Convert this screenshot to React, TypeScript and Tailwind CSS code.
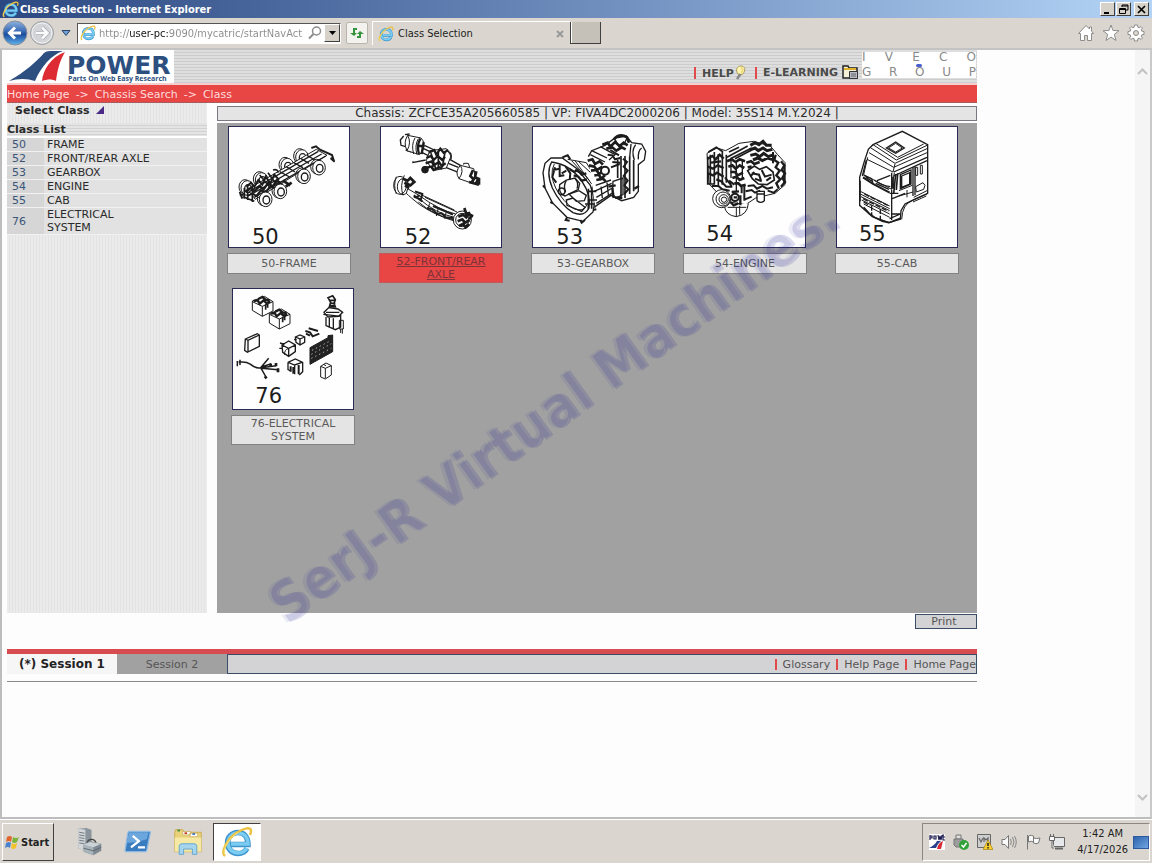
import type { ReactNode } from 'react'

const uiFont = "font-['DejaVu_Sans_Condensed','DejaVu_Sans',sans-serif]"
const pageFont = "font-['DejaVu_Sans',sans-serif]"
const raised =
  'border border-t-white border-l-white border-r-[#404040] border-b-[#404040]'

const sidebarClasses = [
  { code: '50', name: 'FRAME' },
  { code: '52', name: 'FRONT/REAR AXLE' },
  { code: '53', name: 'GEARBOX' },
  { code: '54', name: 'ENGINE' },
  { code: '55', name: 'CAB' },
  { code: '76', name: 'ELECTRICAL SYSTEM' },
]

const cards = [
  { label: '50-FRAME', drawing: <FrameDrawing /> },
  { label: '52-FRONT/REAR AXLE', drawing: <AxleDrawing />, active: true },
  { label: '53-GEARBOX', drawing: <GearboxDrawing /> },
  { label: '54-ENGINE', drawing: <EngineDrawing /> },
  { label: '55-CAB', drawing: <CabDrawing /> },
  { label: '76-ELECTRICAL SYSTEM', drawing: <ElectricalDrawing /> },
]

export default function App() {
  return (
    <div className={`flex min-h-screen flex-col bg-[#dad6cf] ${uiFont} text-[11px] leading-[13px]`}>
      <TitleBar />
      <Toolbar />
      <div className="flex grow border-2 border-t-[#c3c3c3] border-l-[#bdbdbd] border-r-[#c9c9c9] border-b-[#bdbdbd] bg-[#fdfdfd]">
        <main className={`min-w-0 grow pl-[5px] ${pageFont}`}>
          <div className="w-full max-w-[970px]">
            <PageHeader />
            <Breadcrumb />
            <div className="flex">
              <Sidebar />
              <ClassPanel />
            </div>
            <div className="flex justify-end pt-px">
              <button className="h-[15px] w-[62px] border border-[#3a4c66] bg-[#d3d3d5] pr-1 text-[#555]">
                Print
              </button>
            </div>
            <SessionBar />
          </div>
        </main>
        <ScrollBar />
      </div>
      <TaskBar />
    </div>
  )
}

function TitleBar() {
  return (
    <header className="flex h-[18px] items-center gap-px bg-linear-to-r from-[#2c4882] via-[#6d8bbb] to-[#b4d4f6] pr-[3px] pl-[2px]">
      <ExplorerIcon className="size-[17px]" />
      <h1 className="grow text-[11px] font-bold text-white">
        Class Selection - Internet Explorer
      </h1>
      <WindowButton label="Minimize">
        <path d="M3 9h5v2H3z" fill="#000" />
      </WindowButton>
      <WindowButton label="Restore">
        <path d="M5 2h6v5H9M5 2v2M5 3h6M2.5 5.5h6v5h-6zM2 6.500h7" fill="none" stroke="#000" />
      </WindowButton>
      <div className="w-px" />
      <WindowButton label="Close">
        <path d="M3 3l7 7M10 3l-7 7" fill="none" stroke="#000" strokeWidth="1.700" />
      </WindowButton>
    </header>
  )
}

function WindowButton({ label, children }: { label: string; children: ReactNode }) {
  return (
    <button aria-label={label} className={`h-[14px] w-[15px] bg-[#d6d2ca] ${raised}`}>
      <svg viewBox="0 0 13 12" className="h-3 w-[13px]">
        {children}
      </svg>
    </button>
  )
}

function Toolbar() {
  return (
    <div className="flex h-[30px] items-center bg-[#dad6cf] pr-[7px] pl-[2px]">
      <button aria-label="Back" className="z-10">
        <svg viewBox="0 0 26 26" className="size-[26px]">
          <defs>
            <linearGradient id="back" x1="0" y1="0" x2="0" y2="1">
              <stop offset="0" stopColor="#8fb3e0" />
              <stop offset="0.45" stopColor="#3568b4" />
              <stop offset="0.55" stopColor="#1c4c9c" />
              <stop offset="1" stopColor="#5fb4ee" />
            </linearGradient>
          </defs>
          <circle cx="13" cy="13" r="12" fill="url(#back)" stroke="#8b9098" />
          <path d="M19 13H8M13 7.500L7.500 13l5.500 5.500" fill="none" stroke="#fff" strokeWidth="3" />
        </svg>
      </button>
      <button aria-label="Forward" className="ml-px">
        <svg viewBox="0 0 26 26" className="size-[26px]">
          <circle cx="13" cy="13" r="11.500" fill="#d2d4d8" stroke="#9b9da1" />
          <circle cx="13" cy="13" r="10" fill="none" stroke="#f0f1f3" />
          <path d="M7 13h11M13 7.500l5.500 5.500-5.500 5.500" fill="none" stroke="#a9abb0" strokeWidth="4" />
          <path d="M7 13h11M13 7.500l5.500 5.500-5.500 5.500" fill="none" stroke="#fafafa" strokeWidth="2.500" />
        </svg>
      </button>
      <button aria-label="Recent pages" className="mx-[6px]">
        <svg viewBox="0 0 10 8" className="h-2 w-[10px]">
          <path d="M1 1.500h8L5 6.500z" fill="#6fa0d6" stroke="#2d4568" />
        </svg>
      </button>
      <form className="flex h-[21px] w-[264px] items-center border border-t-[#555] border-l-[#555] border-r-white border-b-white bg-white pl-[2px]">
        <ExplorerIcon className="size-4" />
        <input
          aria-label="Address"
          readOnly
          value="http://user-pc:9090/mycatric/startNavAct"
          className="ml-[3px] min-w-0 grow bg-[linear-gradient(90deg,#8a8a8a_31px,#111_31px,#111_69px,#8a8a8a_69px)] bg-clip-text text-transparent outline-none"
        />
        <button type="button" aria-label="Search" className="mr-[2px]">
          <svg viewBox="0 0 14 14" className="size-[14px]" fill="none" stroke="#8c8c8c">
            <circle cx="8.500" cy="5" r="4" strokeWidth="1.500" />
            <path d="M5.500 8L1 12.500" strokeWidth="2" />
          </svg>
        </button>
        <button type="button" aria-label="Show addresses" className={`flex h-[18px] w-4 items-center justify-center bg-[#d6d2ca] ${raised}`}>
          <svg viewBox="0 0 7 4" className="h-1 w-[7px]">
            <path d="M0 0h7L3.500 4z" />
          </svg>
        </button>
      </form>
      <button aria-label="Refresh" className="ml-[5px] flex size-[22px] items-center justify-center rounded-xs border border-[#b9b5ad] bg-[#f3f2ef]">
        <svg viewBox="0 0 16 16" className="size-4" fill="#35953c">
          <path d="M4 3h4v2H6v3h2L5 11 1 8h3z" />
          <path d="M11 6l4 3h-3v4H8v-2h2V9H8z" />
        </svg>
      </button>
      <div className="ml-1 flex h-6 w-[198px] items-center gap-1 border-t border-l border-white pr-[6px] pl-[5px]">
        <ExplorerIcon className="size-4" />
        <span className="grow text-[#222]">Class Selection</span>
        <button aria-label="Close tab">
          <svg viewBox="0 0 8 8" className="size-2" stroke="#999" strokeWidth="2">
            <path d="M1 1l6 6M7 1L1 7" />
          </svg>
        </button>
      </div>
      <div className="h-[22px] border-r border-b border-l border-[#404040]">
        <button aria-label="New tab" className="block h-[21px] w-[29px] border-l border-white bg-[#c5c1b9]" />
      </div>
      <div className="flex grow items-center justify-end gap-[7px]">
        <a href="#" aria-label="Home">
          <svg viewBox="0 0 18 18" className="size-[18px]" fill="#fff" stroke="#8d8d8d">
            <path d="M9 1.500L1.500 9.500h2v7h4v-5h3v5h4v-7h2L14.500 7V3h-2v2z" />
          </svg>
        </a>
        <button aria-label="Favorites">
          <svg viewBox="0 0 18 18" className="size-[18px]" fill="#fff" stroke="#8d8d8d">
            <path d="M9 1l2 5.500 6 .2-4.700 3.700L14 16.500 9 13l-5 3.500 1.700-6.100L1 6.700l6-.2z" />
          </svg>
        </button>
        <button aria-label="Tools">
          <svg viewBox="0 0 18 18" className="size-[18px]">
            <path
              d="M7.500 1h3l.3 2.200 1.400.6L14 2.500 15.500 4l-1.300 1.800.6 1.400 2.200.3v3l-2.200.3-.6 1.400 1.300 1.800-1.500 1.500-1.800-1.300-1.400.6-.3 2.200h-3l-.3-2.200-1.400-.6L4 15.500 2.500 14l1.300-1.800-.6-1.400L1 10.500v-3l2.200-.3.6-1.400L2.500 4 4 2.500l1.800 1.300 1.400-.6z"
              fill="#fff"
              stroke="#8d8d8d"
            />
            <circle cx="9" cy="9" r="2.500" fill="#dad6cf" stroke="#8d8d8d" />
          </svg>
        </button>
      </div>
    </div>
  )
}

function ExplorerIcon({ className }: { className: string }) {
  return (
    <svg viewBox="0 0 32 32" className={className} fill="none">
      <path d="M26 22.500c-2 3.500-5.200 5-9 5-6 0-10.500-4.500-10.500-10.500S11 6.500 17 6.500 27 11 27 18.500H9" stroke="#3c94cf" strokeWidth="5.500" />
      <path d="M26 22c-2 3.500-5.200 5-9 5-6 0-10-4.500-10-10S11 7 17 7s10 4 10 11H10" stroke="#7accf0" strokeWidth="3.500" />
      <path d="M4 30C-1 26 7 12 16 6.500 23 2 30 .500 30 5c0 2-.5 3-1 4" stroke="#ecc040" strokeWidth="2.500" />
      <path d="M4.500 29C0 25 8 12 17 6.500" stroke="#fbe574" />
    </svg>
  )
}

function PageHeader() {
  return (
    <div className="flex h-[35px] items-start justify-between border-b-2 border-[#f3cfcf] bg-[repeating-linear-gradient(180deg,#dedede_0px,#dedede_2px,#cccccc_2px,#cccccc_3px)]">
      <svg viewBox="0 0 167 33" className="h-[33px] w-[167px] bg-white">
        <path d="M2 31C18 22 30 11 37 3q2-2 6-2h13C44 5 34 17 28 31q-12-4-26 0z" fill="#2d4f80" />
        <path d="M35 31C36 20 44 7 58 2c-5 8-8 19-9 29-4-2-8-2-14 0z" fill="#dd2a33" />
        <text x="60" y="24" fontSize="25" fontWeight="bold" fill="#2d4f80">
          POWER
        </text>
        <text x="61" y="31" fontSize="7" fontWeight="bold" fill="#2d4f80" fontFamily="Open Sans">
          Parts On Web Easy Research
        </text>
      </svg>
      <nav className="flex items-start pt-[2px] pr-px font-bold text-[#4a4a4a]">
        <a href="#" className="flex items-center pt-[13px]">
          <span className="mr-[6px] h-3 w-[2px] bg-[#e04a4a]" />HELP
          <svg viewBox="0 0 12 16" className="h-4 w-3">
            <path d="M4 9C1 5 3 1 7 1s5 4 2 8l-3 1z" fill="#fff3b0" stroke="#a8985a" />
            <path d="M7 3c2 0 2 3 0 5" stroke="#f0dc80" strokeWidth="2" fill="none" />
            <path d="M6.500 9L3 14" stroke="#888" strokeWidth="2.500" />
          </svg>
        </a>
        <a href="#" className="flex items-center pt-[13px] pl-[9px]">
          <span className="mr-[6px] h-3 w-[2px] bg-[#e04a4a]" />E-LEARNING
          <svg viewBox="0 0 17 15" className="ml-1 h-[15px] w-[17px]">
            <path d="M1 13V1h5l1 2h8v10z" fill="#f4efd6" stroke="#222" strokeWidth="1.500" />
            <path d="M2 3h12v2H2z" fill="#e0b32a" />
            <path d="M7.500 6.500h8v7h-8z" fill="#b9bcc6" stroke="#333" />
            <path d="M9 9h5M9 11h5" stroke="#666" />
          </svg>
        </a>
        <div className="ml-[3px] flex h-[26px] w-[114px] flex-col justify-between bg-white text-[12px] leading-[11px] font-normal text-[#8a8a8a]">
          <Spaced word="IVECO" />
          <span className="mx-auto h-[3px] w-[6px] rounded-full bg-[#4a5fd0]" />
          <Spaced word="GROUP" />
        </div>
      </nav>
    </div>
  )
}

function Spaced({ word }: { word: string }) {
  return (
    <div className="flex justify-between">
      {word.split('').map((letter) => (
        <span key={letter}>{letter}</span>
      ))}
    </div>
  )
}

function Breadcrumb() {
  return (
    <nav className="flex h-[18px] items-center gap-[6px] border-b border-[#a85b5b] bg-[#e84545] pt-[2px] text-[#ffdcdc]">
      <a href="#">Home Page</a>
      <span>-&gt;</span>
      <a href="#">Chassis Search</a>
      <span>-&gt;</span>
      <a href="#">Class</a>
    </nav>
  )
}

function Sidebar() {
  return (
    <aside className="w-[200px] shrink-0 bg-[repeating-linear-gradient(90deg,#ebebeb_0px,#ebebeb_2px,#e3e3e3_2px,#e3e3e3_3px)] text-[#2a2a2a]">
      <div className="flex h-5 items-start gap-[6px] pt-px pl-2 font-bold">
        Select Class
        <svg viewBox="0 0 8 8" className="mt-[2px] size-2">
          <path d="M8 0v8H0z" fill="#4b2a86" />
        </svg>
      </div>
      <h2 className="h-[15px] border-b-2 border-white bg-[repeating-linear-gradient(180deg,#e4e4e4_0px,#e4e4e4_2px,#d2d2d2_2px,#d2d2d2_3px)] font-bold">
        Class List
      </h2>
      <table className="w-full border-collapse">
        <tbody>
          {sidebarClasses.map(({ code, name }) => (
            <tr key={code} className="border-b border-[#f1f1f1]">
              <td className="w-[37px] bg-[#d6d6d6] pl-[5px]">
                <a href="#" className="text-[#3a5578]">
                  {code}
                </a>
              </td>
              <td className="bg-[#e2e2e2] pr-12 pl-[3px]">{name}</td>
            </tr>
          ))}
        </tbody>
      </table>
    </aside>
  )
}

function ClassPanel() {
  return (
    <section className="ml-[10px] flex min-w-0 grow flex-col pt-[3px]">
      <p className="h-[15px] border border-[#7b7680] bg-[#e4e4e4] text-center text-[12px] text-[#2c2c2c]">
        Chassis: ZCFCE35A205660585 | VP: FIVA4DC2000206 | Model: 35S14 M.Y.2024 |
      </p>
      <div className="relative mt-[2px] min-h-[490px] bg-[#a1a1a1]">
        <ul className="flex flex-wrap">
          {cards.map(({ label, drawing, active }) => (
            <ClassCard key={label} label={label} active={active}>
              {drawing}
            </ClassCard>
          ))}
        </ul>
        <Watermark />
      </div>
    </section>
  )
}

function ClassCard({
  label,
  active = false,
  children,
}: {
  label: string
  active?: boolean
  children: ReactNode
}) {
  return (
    <li className="flex w-[152px] flex-col items-center gap-[5px] pt-[3px] pr-2 pb-[2px] last:pr-0">
      <a href="#" aria-label={label} className="border border-[#2b2a55] bg-[#fefefe]">
        {children}
      </a>
      <a
        href="#"
        className={`flex min-h-[21px] w-[124px] items-center justify-center border px-3 py-px text-center ${
          active
            ? 'border-[#c05a5a] bg-[#e84545] text-[#7d3338] underline'
            : 'border-[#828282] bg-[#e4e4e4] text-[#5a5a5a]'
        }`}
      >
        {label}
      </a>
    </li>
  )
}

function Watermark() {
  return (
    <svg viewBox="0 0 760 520" className="pointer-events-none absolute top-0 left-0 h-[520px] w-[760px] overflow-visible">
      <g transform="translate(71 503) rotate(-35.800)" fontSize="56" fontWeight="bold" className={uiFont}>
        <text fill="#1c1896" fillOpacity="0.080" x="-3" y="-2">
          SerJ-R Virtual Machines.
        </text>
        <text fill="#1c1896" fillOpacity="0.150">
          SerJ-R Virtual Machines.
        </text>
      </g>
    </svg>
  )
}

function SessionBar() {
  return (
    <footer className="mt-5 border-b border-[#8a8a8a] pb-[7px]">
      <div className="flex h-[25px] border-t-5 border-[#d64c50] text-[#555]">
        <button className="w-[110px] bg-[#f6f6f6] text-[12px] font-bold text-[#222]">
          (*) Session 1
        </button>
        <button className="w-[110px] bg-[#a1a1a1]">Session 2</button>
        <nav className="flex grow items-center justify-end gap-[6px] border border-[#3a4c66] bg-[#d3d3d5]">
          <span className="h-[11px] w-[2px] bg-[#e04a4a]" />
          <a href="#">Glossary</a>
          <span className="h-[11px] w-[2px] bg-[#e04a4a]" />
          <a href="#">Help Page</a>
          <span className="h-[11px] w-[2px] bg-[#e04a4a]" />
          <a href="#">Home Page</a>
        </nav>
      </div>
    </footer>
  )
}

function ScrollBar() {
  return (
    <div className="flex w-[15px] flex-col items-center justify-between bg-[#f5f5f5] pt-[18px] pb-4">
      <svg viewBox="0 0 11 7" className="h-[7px] w-[11px]" fill="none" stroke="#c2c2c2" strokeWidth="2">
        <path d="M1 6l4.500-4.500L10 6" />
      </svg>
      <svg viewBox="0 0 11 7" className="h-[7px] w-[11px]" fill="none" stroke="#c2c2c2" strokeWidth="2">
        <path d="M1 1l4.500 4.500L10 1" />
      </svg>
    </div>
  )
}

function TaskBar() {
  return (
    <footer className="flex h-11 items-start border-t border-white bg-[#dad6cf] pt-[3px] pr-[2px] pl-[2px]">
      <button className={`flex h-[38px] w-[52px] items-center gap-px pl-px font-bold text-[#222] ${raised}`}>
        <svg viewBox="0 0 16 16" className="size-4">
          <path d="M3 3q3-2 5 0L7 8Q5 6 2 8z" fill="#e2632c" />
          <path d="M9 3q3 2 6 0l-2 5q-3 2-5 0z" fill="#7db53c" />
          <path d="M2 9q3-2 5 0l-1 5q-2-2-5 0z" fill="#4a83cc" />
          <path d="M8 9q2 2 5 0l-1 5q-3 2-5 0z" fill="#f2c22e" />
        </svg>
        Start
      </button>
      <div className="ml-[9px] flex">
        <TaskButton label="Server Manager">
          <path d="M6 2l9-1 6 2v20l-7 3-8-2z" fill="#8b949c" />
          <path d="M6 2l8 1v23l-8-2z" fill="#d3d7da" />
          <path d="M7 6l6 1M7 9l6 1M7 12l6 1M7 15l6 1M7 18l6 1" stroke="#687078" />
          <path d="M16 18q1-4 5-4t5 4" fill="none" stroke="#444" strokeWidth="1.500" />
          <path d="M12 20l7-4 13 3v8l-9 5-11-4z" fill="#7d8890" />
          <path d="M12 20l11 3v9l-11-4z" fill="#a9b3ba" />
          <path d="M12 20l7-3 13 2-9 4z" fill="#ccd3d7" />
          <path d="M12 24l11 3 9-4" fill="none" stroke="#5a646b" />
        </TaskButton>
        <TaskButton label="Windows PowerShell">
          <path d="M7 5h23q1 0 1 1l-4 20q-.5 2-2 2H4q-2 0-1.500-2L5.500 7Q6 5 7 5z" fill="#3a7cc0" stroke="#8cb8e2" strokeWidth="1.500" />
          <path d="M7 6h22l-2 8Q15 18 4 18z" fill="#6ba6dc" />
          <path d="M11 10l7 6-9 7M17 23h8" fill="none" stroke="#fff" strokeWidth="2.500" />
        </TaskButton>
        <TaskButton label="Windows Explorer">
          <path d="M2 6l1-3h8l2 3h19v22H2z" fill="#e9d27a" stroke="#c9a94c" />
          <path d="M11 5h9v4h-9zM19 7h9v4h-9z" fill="#fff" stroke="#c9b36a" />
          <path d="M5 4h3" stroke="#3b8c3b" strokeWidth="2" />
          <path d="M13 7h3" stroke="#c33b2a" strokeWidth="2" />
          <path d="M22 8h3" stroke="#3b6fc3" strokeWidth="2" />
          <path d="M2 12h30v16H2z" fill="#f6e9a6" />
          <path d="M7 31V22q0-3 3-3h14q3 0 3 3v9h-5v-6H12v6z" fill="#a5d4ee" stroke="#5ba3cd" />
        </TaskButton>
        <button aria-label="Class Selection" className="flex h-[38px] w-[48px] items-center justify-center border border-t-[#404040] border-l-[#404040] border-r-white border-b-white bg-white">
          <ExplorerIcon className="size-8" />
        </button>
      </div>
      <div className="ml-auto flex h-[38px] items-center gap-2 border border-t-[#8a8680] border-l-[#8a8680] border-r-white border-b-white pl-[6px]">
        <TrayIcon>
          <path d="M0 0h16v16H0z" fill="#fff" />
          <path d="M1 1v5M1 2h2v2H1M5 2h2v3H5zM9 1l1 5 1-4 1 4 1-5M15 1h-1v5h2M14 3h2" fill="none" stroke="#1c1c50" strokeWidth="1.200" />
          <path d="M0 14q6-3 8-7h4q-4 3-5 7z" fill="#27408b" />
          <path d="M8 15q1-6 6-8l-2 8z" fill="#d82a33" />
        </TrayIcon>
        <TrayIcon>
          <path d="M3 1h5v4H3z" fill="#ddd" stroke="#777" />
          <path d="M1 5h9v6l-2 2H3l-2-2z" fill="#9d9d9d" stroke="#777" />
          <circle cx="11" cy="11" r="5" fill="#34a23a" />
          <path d="M8.500 11l2 2 3-4" fill="none" stroke="#fff" strokeWidth="1.500" />
        </TrayIcon>
        <TrayIcon>
          <path d="M.5 .5h13v13H.5z" fill="#cfcfcf" stroke="#666" />
          <path d="M2 4l2 4 2-4M7 8V4l2 2 2-2v4" fill="none" stroke="#666" strokeWidth="1.200" />
          <path d="M11 6l5 9.500H6z" fill="#f8cf2c" stroke="#a88712" strokeWidth=".7" />
          <path d="M11 9v3M11 13v1.500" stroke="#222" strokeWidth="1.500" />
        </TrayIcon>
        <TrayIcon>
          <path d="M1 5.500h3l3.500-4v13L4 10.500H1z" fill="#fafafa" stroke="#777" />
          <path d="M9.500 5q1.500 3 0 6M11.500 3q3 5 0 10M13.500 2q3.500 6 0 12" fill="none" stroke="#888" />
        </TrayIcon>
        <TrayIcon>
          <path d="M2.500 1v14.500M3.500 2q3-1.500 5 0v6q-2-1.500-5 0zM8.500 4q3 1 6.500 0l-1.500 5q-2.500 1.500-5 0z" fill="#fafafa" stroke="#777" />
        </TrayIcon>
        <TrayIcon>
          <path d="M4.500 3.500h11v9h-11z" fill="#e6e8ea" stroke="#666" />
          <path d="M6 14.500h8" stroke="#666" strokeWidth="2" />
          <path d="M.5 2.500h5v4h-5zM1.500 0v2M4.500 0v2M3 6v8h2" fill="#fafafa" stroke="#666" />
        </TrayIcon>
        <div className="ml-1 text-center leading-4 text-[#222]">
          <div>1:42 AM</div>
          <div>4/17/2026</div>
        </div>
        <button aria-label="Show desktop" className="-ml-[3px] h-[13px] w-4 border border-[#2d5a9e] bg-linear-to-br from-[#2f62ad] to-[#6fa5e0]" />
      </div>
    </footer>
  )
}

function TaskButton({ label, children }: { label: string; children: ReactNode }) {
  return (
    <button aria-label={label} className="flex h-[38px] w-[50px] items-center justify-center">
      <svg viewBox="0 0 34 34" className="size-[30px]">
        {children}
      </svg>
    </button>
  )
}

function TrayIcon({ children }: { children: ReactNode }) {
  return (
    <svg viewBox="0 0 16 16" className="size-4">
      {children}
    </svg>
  )
}

/* Line drawings: 360 units across, 3 units to a pixel */

function Drawing({
  box,
  code,
  x,
  y,
  children,
}: {
  box: string
  code: string
  x: number
  y: number
  children: ReactNode
}) {
  return (
    <svg viewBox={box} className="size-[120px] overflow-visible">
      <g fill="none" stroke="#1c1c1c" strokeWidth="3">
        {children}
      </g>
      <text x={x} y={y} fontSize="63" fill="#1c1c1c">
        {code}
      </text>
    </svg>
  )
}

function Wheel({ x, y }: { x: number; y: number }) {
  return (
    <>
      <ellipse cx={x - 7} cy={y - 3} rx="18" ry="22" />
      <ellipse cx={x} cy={y} rx="19" ry="22" fill="#fff" />
      <ellipse cx={x + 2} cy={y + 2} rx="10" ry="12" strokeWidth="4" />
    </>
  )
}

function FrameDrawing() {
  return (
    <Drawing box="28 21 360 360" code="50" x={97} y={373}>
      <Wheel x={83} y={204} />
      <Wheel x={126} y={180} />
      <Wheel x={203} y={137} />
      <Wheel x={247} y={111} />
      <path d="M84 208L290 88l32 18-215 132z" fill="#fff" />
      <path d="M90 214L296 94M96 222L306 102M104 232L318 108" strokeWidth="4" />
      <path d="M180 155l30 16M200 140l26 16M222 128l28 15M244 116l24 14M262 106l24 14" strokeWidth="4" />
      <path d="M80 200l14-12 10 12 12-20 12 14 10-24 14 20 12-26 14 16" strokeWidth="6" />
      <path d="M78 214l16-10 10 10 16-16 12 10 14-20 12 12 14-18 12 8" strokeWidth="7" />
      <path d="M84 228l14-8 12 8 14-18 14 8 14-20 14 6 14-14 10 4" strokeWidth="6" />
      <path d="M74 204v32M84 196v44M98 196v50M70 230l34 14M145 158l24 34M160 150q14-4 16 8M120 165l30 36" strokeWidth="5" />
      <path d="M60 216l8 20M60 224h12M275 84l14-5 12 10 36 16 4 12-8-2 12 10" strokeWidth="6" />
      <path d="M190 182l22 14M198 200l18-12" strokeWidth="8" />
      <Wheel x={138} y={238} />
      <Wheel x={182} y={214} />
      <Wheel x={253} y={169} />
      <Wheel x={298} y={143} />
    </Drawing>
  )
}

function AxleDrawing() {
  return (
    <Drawing box="484 21 360 360" code="52" x={555} y={373}>
      <path d="M552 48l-10 12 2 16 14 4M556 44l14-2M558 90l18 6" strokeWidth="4" />
      <path d="M564 46l40 8q14 14 6 36l-10 14-38-12q-12-24 2-46z" fill="#fff" />
      <path d="M564 46q12 22-2 46M586 54q-12 20-4 48M596 56q-12 20-4 48" />
      <path d="M602 56q-12 22-4 46M612 66l-6 36M594 78h20" strokeWidth="7" />
      <path d="M614 76l30 14M608 98l32 16M612 86l30 14M690 118l32 18M678 142l40 16M686 130l30 12" strokeWidth="4" />
      <path d="M630 92l50-6 14 22-14 36-40 8-20-30z" fill="#fff" />
      <path d="M628 98l16-8 6 14 12-18 10 12 14-8M620 114l14-6 8 12 12-12 14 12 8-10M618 130l18-6 6 12 16-10 8 12 12-8M616 144l20-4 6 10 16-8 10 4" strokeWidth="7" />
      <path d="M634 100l14 46M656 96v48M676 96l-8 46" strokeWidth="5" />
      <circle cx="616" cy="149" r="10" fill="#1c1c1c" />
      <path d="M578 128l40-8M580 124v6M684 94q14 2 10 24" strokeWidth="4" />
      <path d="M722 136l40 10q8 20-4 44l-40-14q-14-20 4-40z" fill="#fff" />
      <path d="M722 136q12 18-4 40M732 134v-4h14l4 12" />
      <path d="M760 150l-8 18 10 10-8 12M770 154l-4 18 10 4-8 16M748 186l30 8M778 174v20" strokeWidth="8" />
      <ellipse cx="541" cy="196" rx="19" ry="27" />
      <ellipse cx="550" cy="200" rx="17" ry="24" />
      <path d="M530 170q-10 26 0 52M554 166q-14 30-4 60" />
      <path d="M550 176l14 6 8-8 12 12-12 10-18-8M556 196l12 8" strokeWidth="8" />
      <path d="M564 206l34 20q60 44 110 56v22Q650 288 600 254q-30-24-40-34z" fill="#fff" />
      <path d="M604 224l100 46M598 236q50 44 106 56M596 246q50 42 108 54M616 232l96 44M630 250l-6 20M656 264l-6 24M680 276l-6 20" />
      <path d="M586 214l22 8-4 16-16-6 12-6M582 226l26 18M622 264l16 4 14 14 14-2 12 12 22 2M640 258l60 26" strokeWidth="6" />
      <circle cx="728" cy="300" r="27" fill="#fff" />
      <circle cx="728" cy="300" r="20" />
      <path d="M716 290l14-6 10 8 8-10 12 8M714 304l14-6 8 10 14-8M718 318l12-6 8 10 10-10M734 264l6 18 12-4M756 282l-6 16" strokeWidth="8" />
    </Drawing>
  )
}

function GearboxDrawing() {
  return (
    <Drawing box="24 21 360 360" code="53" x={94} y={373}>
      <path d="M78 114L60 130l-6 28 6 46 22 44 44 44 48 12 30-28 6-36-14-44-40-50-44-32z" fill="#fff" strokeWidth="4" />
      <path d="M80 126q-18 30 2 78 24 50 62 74 34 14 48-14 6-40-20-78-34-52-92-60z" strokeWidth="4" />
      <path d="M88 132q-16 30 4 72 24 44 54 62 30 12 40-12" />
      <path d="M112 112l16-6 8 12M60 204l-6-8M84 250l-8-4M126 292l-4 8 12 2M166 300l4 8 10-8M204 270l10-2" strokeWidth="6" />
      <path d="M104 194l20-14 26-6 14 16-4 18-40 20q-20-6-16-34z" fill="#fff" strokeWidth="4" />
      <circle cx="110" cy="214" r="10" strokeWidth="5" />
      <path d="M124 182q-10 14-2 34M150 176q12 10 6 30M132 222l30-10 22 14-6 16-24 2zM124 240l20-6 36 28-10 12-44-18z" strokeWidth="4" />
      <path d="M90 142l-8 30 12 16M104 134v34l14-2M122 140l14 20-2 20M150 150l26 12M84 150l20-4M110 160l14-8" strokeWidth="6" />
      <path d="M134 148l14 8 10-6 12 14 14-4M146 166l14 4 10 12 16-4" strokeWidth="7" />
      <path d="M128 118l56 10 22 36-4 40 8 60M140 122l54 60M160 124l50 46M150 122l50 70" />
      <path d="M190 110l10-18 40-16 30-22 34-6 16 20 30 4 12 22-4 26-18 14v80l-14 18-36 10-32-16-48 34" fill="#fff" strokeWidth="4" />
      <path d="M200 92l46 22M196 104l44 22M226 80l44 24-18 16M270 58l14 26M306 54l-10 22M318 72l-4 40M332 74q-14 18-4 46M350 84q-12 8-10 34" strokeWidth="4" />
      <path d="M266 58q18-20 40-6l6 16M232 74l16-6 8 12 14-14 14 12 12-10 12 8M244 86l18-4 12 10 16-10 12 6" strokeWidth="8" />
      <path d="M188 122l14-4 8 14 14-8 10 10M192 136l16 4 8 10 16-10M198 152l16-2 8 12 12-8M208 166l14-2 6 12 12-10M214 180l20-4 8 8" strokeWidth="8" />
      <path d="M248 104l14 2 8 12 16-4M256 90l26 16M262 126l24 2M258 142l26-10" strokeWidth="6" />
      <circle cx="240" cy="152" r="12" fill="#fff" strokeWidth="6" />
      <path d="M278 120v54M288 108v126M300 108v126M314 110v112M326 120v94" strokeWidth="5" />
      <path d="M294 116l12 10-10 14 12 12-12 16 12 14-10 14 12 12-12 14" strokeWidth="6" />
      <path d="M264 184l30-10v50l-22 10-10-12zM212 196l46-16M208 214l52-24M214 232l48-28M214 250l50-32M228 200l4 34M246 188l4 36" strokeWidth="4" />
      <path d="M250 200l22-4M262 204l4 30M270 232l22 2M328 206l14-8" strokeWidth="7" />
      <path d="M190 206v62M200 202v64M188 214h26M188 240h28M180 252h30" strokeWidth="5" />
    </Drawing>
  )
}

function EngineDrawing() {
  return (
    <Drawing box="480 21 360 360" code="54" x={544} y={362}>
      <path d="M546 100l30-16 26 8 40-22 44-6 50 14 22 26 22 24v66l-30 26-58 14-30 20-60-10-50-52z" fill="#fff" />
      <path d="M550 96l24-14 20 14M556 104v90M568 96v98M580 102v96M592 94v100M548 110v82h20M604 104v84" strokeWidth="5" />
      <path d="M548 116l14-8 10 10 12-14 12 12M548 140l16 6 14-10 18 8M550 160l14 6 12-8 20 12M574 178l20 8M558 128l30-4" strokeWidth="7" />
      <path d="M606 112l62-34M616 116l64-32M630 116l50-26M612 96l30-14" strokeWidth="5" />
      <path d="M676 76l14-8 12 6 12-10 10 12 16 0M674 90l16-6 10 8 14-8 12 8 16-4M676 106l16-4 12 8 12-10 14 10 16-6M684 120l14-6 14 8 16-8 20 6" strokeWidth="9" />
      <path d="M606 124l14-6 12 8 12-8 16 6M610 140l12-4 10 10 12-10 14 8M616 156l14 0 8 10 16-8M622 174l12-4 10 10 14-6M628 190l12 0 8 8 14-4M664 128l14-4 10 8 16-6M668 142l12-2" strokeWidth="8" />
      <path d="M634 126v90M652 120v60M618 120v54" strokeWidth="4" />
      <path d="M668 152l20-14 16 10 20-8 20 16 4 24-22 14-26-2-18-16z" fill="#fff" strokeWidth="5" />
      <path d="M680 160l22 4 6 18M710 150l10 20 20-6M690 176l20 8M676 170l12-14M724 182l14-10" strokeWidth="6" />
      <path d="M752 104l-4 16 12 8-8 14 12 10-10 14 12 12-12 12 8 16M768 124l10 12-8 14 10 10-8 14 8 12-12 14" strokeWidth="7" />
      <path d="M778 134v58M744 96v34" strokeWidth="6" />
      <path d="M668 198l18-2 10 10 16-8 14 8 18-4M662 214l18-4 10 8 16-6M728 212l18 6 12-10M660 238l20-8M658 196v46M650 200v20" strokeWidth="6" />
      <path d="M560 198l20 0 12 10 22 4M590 186l14 14 18 0M600 172l20 26M612 182l16 12" strokeWidth="6" />
      <path d="M598 258q4 28 36 32 34-6 36-40" fill="#fff" />
      <path d="M634 262v28M644 258v26M608 262h56" />
      <circle cx="590" cy="236" r="27" fill="#fff" />
      <circle cx="594" cy="237" r="21" />
      <circle cx="596" cy="238" r="14" />
      <circle cx="597" cy="239" r="8" />
      <circle cx="630" cy="232" r="11" strokeWidth="6" />
      <path d="M616 246l10 10 14-6M620 216l22-2M646 226v30M626 232h10" strokeWidth="7" />
      <path d="M696 214h22v28q-10 10-22 0zM696 222h22" fill="#fff" strokeWidth="4" />
    </Drawing>
  )
}

function CabDrawing() {
  return (
    <Drawing box="110 21 360 360" code="55" x={176} y={362}>
      <path d="M218 74l88-40 76 40v146l-40 18-28 14-12 20-2 26-34 10-50-18-38-34v-84l14-48 12-36z" fill="#fff" strokeWidth="4" />
      <path d="M218 74l70 46 92-44M212 84l72 46 96-44M206 98l74 44 100-44M200 118l78 38M284 132l-6 24M226 70l66 42 78-40" />
      <path d="M258 84l28-18 26 18-26 16z" strokeWidth="4" />
      <path d="M264 84l22-14 20 14-20 12z" />
      <path d="M202 112l-12 52 84 44 8-50" />
      <path d="M274 158v50M280 156l100-44M280 168l100-46M198 120l-12 48M338 142v86M344 140v86" strokeWidth="4" />
      <path d="M300 164l32-14v42l-32 14zM304 168l24-10v34l-24 10z" strokeWidth="4" />
      <path d="M292 160l-4 50M286 162l-6 60M278 170v36" strokeWidth="5" />
      <path d="M346 142h6v24h-6zM360 136h6v26h-6z" strokeWidth="3" />
      <path d="M346 200l22-12 6 8-4 12-22 8zM340 232l40-20M320 210v22M296 212l40-16M296 228l42-12" />
      <path d="M190 166l24 10 4 14M196 172l20 12M230 182l40-16M226 190l40 18M222 180q20 16 48 20" strokeWidth="4" />
      <path d="M188 172l30 20 50 26" strokeWidth="6" />
      <path d="M180 214l88 44M180 222l88 44M182 230l86 42M184 240l84 42M190 252l78 40M180 182v62" />
      <path d="M192 222l70 34M188 236l76 38M190 246l20 12M214 256v30M240 266v32" strokeWidth="4" strokeDasharray="16 5" />
      <path d="M274 210v90M268 220h26M276 236l38-16M272 282h28M268 296l32-14" strokeWidth="4" />
      <path d="M380 222l-44 20q-30 10-32 56M378 228l-40 18" />
      <path d="M190 262q30 40 76 46l36-14" strokeWidth="5" />
    </Drawing>
  )
}

function Battery({ x, y }: { x: number; y: number }) {
  return (
    <g transform={`translate(${x} ${y})`}>
      <path d="M0 16l36-14 26 16v28L30 62 0 44zM0 18l30 14v30M30 32l32-14" fill="#fff" strokeWidth="3" />
      <path d="M4 16l12-2 6 10 12-10 8 8 12-4M18 10l12-6 10 8 12 2" strokeWidth="7" />
      <path d="M40 26v16M46 24v12" strokeWidth="5" />
    </g>
  )
}

function ElectricalDrawing() {
  return (
    <Drawing box="39 28 360 360" code="76" x={106} y={369}>
      <Battery x={97} y={48} />
      <Battery x={148} y={86} />
      <path d="M324 54l14-6 8 12-4 12 4 10h-18l4-14zM330 62h14M332 70l14 2M330 78h14" strokeWidth="5" />
      <path d="M312 98l14-14 28 4 14 10-12 12-32 2z" fill="#fff" strokeWidth="4" />
      <path d="M318 112v26l28 12 16-8v-36M328 114v30M340 116v32M310 104l54 6M318 98h40" strokeWidth="4" />
      <path d="M358 122h12v26h-12zM362 148v12M367 148v14" strokeWidth="3" />
      <path d="M76 178l36-16 6 4v34l-36 18-8-6zM76 178l8 4 34-16M84 182v34" fill="#fff" strokeWidth="4" />
      <path d="M256 154l14 4 8 12 20-8M266 146l28 8M258 162l12 6" strokeWidth="6" />
      <path d="M226 172l14-6 14 6v16l-14 8-12-8zM226 172l14 6v16M240 178l14-6M222 180h8" strokeWidth="4" />
      <path d="M186 196l20-12 20 12v20l-20 14-18-12zM186 196l20 10v22M206 206l20-10M178 206h8M180 190l14 4" strokeWidth="4" />
      <path d="M206 206q-14 4-12 20" />
      <path d="M270 204l54-30v-6l14-2v50l-68 38z" fill="#222" />
      <path d="M276 212l58-30M274 224l60-32M274 236l60-30" stroke="#fff" strokeWidth="2" strokeDasharray="4 9" />
      <path d="M52 244v16M60 240v16M56 248q20-4 36 6 16 14 32 10l44-6M122 264l24-28M122 264l16 28M124 262l30-10M124 266l50 4" strokeWidth="4.500" />
      <path d="M168 250v10M174 266v12M152 252v8M134 290l6 6" strokeWidth="8" />
      <path d="M204 248l22-10 22 10v28l-10 10M204 248l20 8 22-8M204 248v22l8 4M224 256v28" strokeWidth="4" />
      <path d="M212 260v16M220 262v20M236 256v28" strokeWidth="6" />
      <path d="M302 260l16-10 16 8v28l-18 12-14-6zM302 260l14 6v30M316 266l18-8M310 254l8 4" strokeWidth="3" />
    </Drawing>
  )
}
